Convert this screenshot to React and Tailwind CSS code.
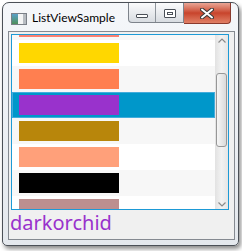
import { useState } from 'react'

const colors = [
    { name: 'salmon', hex: '#fa8072' },
    { name: 'gold', hex: '#ffd700' },
    { name: 'coral', hex: '#ff7f50' },
    { name: 'darkorchid', hex: '#9932cc' },
    { name: 'darkgoldenrod', hex: '#b8860b' },
    { name: 'lightsalmon', hex: '#ffa07a' },
    { name: 'black', hex: '#000000' },
    { name: 'rosybrown', hex: '#bc8f8f' },
]

function TitleButtons() {
    return (
        <div className="flex items-start shrink-0">
            <div className="flex shrink-0 h-[20px] rounded-bl-[4px] border border-t-0 border-[#7d838b] bg-gradient-to-b from-[#fbfbfc] to-[#d8dce1] overflow-hidden">
                <div className="w-[27px] shrink-0 flex items-center justify-center border-r border-[#8e949b]">
                    <div className="w-[12px] h-[4px] mt-[6px] border border-[#4a4f57] rounded-[1px] bg-white" />
                </div>
                <div className="w-[27px] shrink-0 flex items-center justify-center">
                    <div className="w-[12px] h-[9px] mt-[1px] border border-[#4a4f57] rounded-[1px] bg-white flex items-center justify-center">
                        <div className="w-[6px] h-[3px] border border-[#4a4f57]" />
                    </div>
                </div>
            </div>
            <div className="w-[47px] shrink-0 h-[21px] rounded-br-[4px] border border-t-0 border-l-0 border-[#8a3a2e] bg-gradient-to-b from-[#e8a595] via-[#c8442c] to-[#e07f66] flex items-center justify-center">
                <svg width="14" height="11" viewBox="0 0 14 11">
                    <path d="M2 1.5 L12 9.5 M12 1.5 L2 9.5" stroke="#3a3a3a" strokeWidth="4" strokeLinecap="round" />
                    <path d="M2 1.5 L12 9.5 M12 1.5 L2 9.5" stroke="#ffffff" strokeWidth="2" strokeLinecap="round" />
                </svg>
            </div>
        </div>
    )
}

function ScrollBar() {
    return (
        <div className="w-[13px] shrink-0 flex flex-col bg-gradient-to-r from-[#e2e2e2] via-[#f2f2f2] to-[#e6e6e6]">
            <div className="h-[10px] flex items-center justify-center">
                <svg width="8" height="5" viewBox="0 0 8 5">
                    <path d="M0.5 4.5 L4 1 L7.5 4.5" stroke="#8a8a8a" strokeWidth="1.2" fill="none" />
                </svg>
            </div>
            <div className="flex-1 px-[1px] pt-[28px]">
                <div className="h-[74px] rounded-[3px] border border-[#979797] bg-gradient-to-r from-[#f6f6f6] to-[#dadada]" />
            </div>
            <div className="h-[10px] flex items-center justify-center">
                <svg width="8" height="5" viewBox="0 0 8 5">
                    <path d="M0.5 0.5 L4 4 L7.5 0.5" stroke="#8a8a8a" strokeWidth="1.2" fill="none" />
                </svg>
            </div>
        </div>
    )
}

function App() {
    const [selected] = useState('darkorchid')
    const current = colors.find((c) => c.name === selected)

    return (
        <div className="w-[242px] h-[251px] bg-white pt-[2px] pl-[2px] font-['Noto_Sans',sans-serif]">
            <div className="w-[237px] h-[244px] flex flex-col rounded-t-[7px] rounded-b-[5px] border border-[#4b5057] bg-gradient-to-b from-[#f5f7fa] to-[#e4e8ed] shadow-[2px_3px_4px_rgba(0,0,0,0.45)] overflow-hidden">
                <div className="h-[28px] flex items-start pl-[8px] pr-[7px]">
                    <div className="mt-[10px] shrink-0 w-[16px] h-[12px] border border-[#7a8088] bg-[#e9ecef] flex">
                        <div className="w-[6px] bg-gradient-to-b from-[#5aa0c8] to-[#4f8f5a]" />
                        <div className="flex-1 bg-[#f3f4f5]" />
                        <div className="w-[3px] bg-[#b7bcc2]" />
                    </div>
                    <div className="ml-[5px] mt-[7px] text-[12px] leading-[16px] text-black font-['Lato',sans-serif] whitespace-nowrap">ListViewSample</div>
                    <div className="flex-1" />
                    <TitleButtons />
                </div>
                <div className="flex-1 ml-[5px] mr-[3px] mb-[5px] border border-[#858a91] bg-[#f0f0f0] flex flex-col">
                    <div className="mt-[2px] ml-[2px] mr-[5px] h-[176px] border border-[#1d9ad6] bg-white flex overflow-hidden">
                        <div className="flex-1 overflow-hidden">
                            <div className="mt-[-21px]">
                                {colors.map((c, i) => (
                                    <div
                                        key={c.name}
                                        className={
                                            c.name === selected
                                                ? 'h-[26px] pl-[7px] flex items-center border border-[#43acdc] bg-[#0097ca]'
                                                : i % 2 === 0
                                                  ? 'h-[26px] pl-[7px] flex items-center bg-[#f7f7f7]'
                                                  : 'h-[26px] pl-[7px] flex items-center bg-white'
                                        }
                                    >
                                        <div
                                            className={c.name === selected ? 'w-[100px] h-[20px] -ml-px' : 'w-[100px] h-[20px]'}
                                            style={{ backgroundColor: c.hex }}
                                        />
                                    </div>
                                ))}
                            </div>
                        </div>
                        <ScrollBar />
                    </div>
                    <div className="pl-[1px] text-[20px] leading-[26px]" style={{ color: current.hex }}>
                        {current.name}
                    </div>
                </div>
            </div>
        </div>
    )
}

export default App
